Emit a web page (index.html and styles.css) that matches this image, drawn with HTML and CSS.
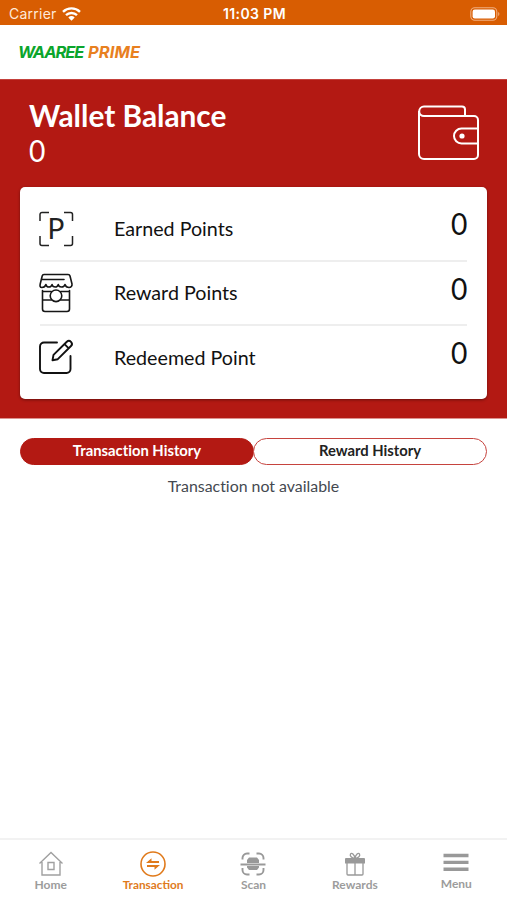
FILE: index.html
```
<!DOCTYPE html>
<html lang="en">
<head>
    <meta charset="UTF-8">
    <title>Waaree Prime - Wallet</title>
    <link rel="stylesheet" href="styles.css">
</head>
<body>
    <div class="status-bar">
        <div class="carrier">
            <span>Carrier</span>
            <svg width="19" height="14" viewBox="0 0 19 14" fill="none" stroke="#fff" stroke-width="2.4">
                <path d="M1 4.8a12.3 12.3 0 0 1 17 0"/>
                <path d="M4 8.2a8 8 0 0 1 11 0"/>
                <path d="M9.5 13.8 6.3 10.6a4.7 4.7 0 0 1 6.4 0z" fill="#fff" stroke="none"/>
            </svg>
        </div>
        <span class="time">11:03 PM</span>
        <svg class="battery" width="30" height="14" viewBox="0 0 30 14">
            <rect x="0.8" y="0.8" width="26" height="12.4" rx="4" fill="none" stroke="#f0ae80" stroke-width="1.1"/>
            <rect x="2.6" y="2.6" width="22.4" height="8.8" rx="2.2" fill="#fff"/>
            <path d="M28.2 5v4c1.6-.8 1.6-3.2 0-4z" fill="#f0ae80"/>
        </svg>
    </div>

    <header class="header">
        <div class="logo">
            <span class="logo-green">WAAREE</span>
            <span class="logo-orange">PRIME</span>
        </div>
    </header>

    <section class="wallet">
        <div class="balance">
            <div>
                <h1>Wallet Balance</h1>
                <p>0</p>
            </div>
            <svg width="62" height="56" viewBox="0 0 62 56" fill="none" stroke="#fff" stroke-width="2">
                <path d="M47 11V4.500a3 3 0 0 0-3-3H6a4.800 4.800 0 0 0 0 9.600h50a4 4 0 0 1 4 4V50a4 4 0 0 1-4 4H6a5 5 0 0 1-5-5V6"/>
                <path d="M60 23.500H43.500a7.500 7.500 0 0 0 0 15H60"/>
                <circle cx="44" cy="31" r="2.600" fill="#fff" stroke="none"/>
            </svg>
        </div>

        <div class="card">
            <div class="row">
                <svg class="row-icon" width="36" height="40" viewBox="0 0 36 40" fill="none" stroke="#222" stroke-width="1.500">
                    <path d="M1 12V5.500a2 2 0 0 1 2-2h7M25 3.500h6.500a2 2 0 0 1 2 2V12M33.500 27v7.500a2 2 0 0 1-2 2H25M10 36.500H3a2 2 0 0 1-2-2V27"/>
                    <text x="8.500" y="29.500" class="p-mark">P</text>
                </svg>
                <span class="label">Earned Points</span>
                <span class="value">0</span>
            </div>
            <div class="row">
                <svg class="row-icon" width="36" height="40" viewBox="0 0 36 40" fill="none" stroke="#161616" stroke-width="1.600" stroke-linecap="round" stroke-linejoin="round">
                    <path d="M5 1.500h24a2 2 0 0 1 2 1.500l2 8c.3 2-1 3.500-3 3.500s-3.500-1.300-4-3c-.5 1.700-2 2.500-3.500 2.500s-3-.8-3.200-2.500c-.5 1.700-1.500 2.500-3 2.500s-3-.8-3.200-2.500c-.5 1.700-1.800 2.500-3.200 2.500-1.500 0-2.700-.8-3-2.500-.5 1.700-2 3-4 3S.8 13 1.200 11l2-8A2 2 0 0 1 5 1.500zM3.500 6.500H25"/>
                    <path d="M3.500 17.500V36a2.500 2.500 0 0 0 2.500 2.500h22a2.500 2.500 0 0 0 2.500-2.500V17.500M3.500 18.500h8.800M21.700 18.500h8.800M3.500 27h8.700M21.800 27h8.700"/>
                    <circle cx="17" cy="22.800" r="5.800"/>
                </svg>
                <span class="label">Reward Points</span>
                <span class="value">0</span>
            </div>
            <div class="row">
                <svg class="row-icon" width="36" height="40" viewBox="0 0 36 40" fill="none" stroke="#111" stroke-width="1.900" stroke-linecap="round" stroke-linejoin="round">
                    <path d="M18 4.500H5a4 4 0 0 0-4 4V31a4 4 0 0 0 4 4h22.500a4 4 0 0 0 4-4V18"/>
                    <path d="M13.500 22.200l1-5.300L27.800 3.800a2.900 2.900 0 0 1 4.200 4.200L18.800 21.200zM25.500 6.200l4 4"/>
                </svg>
                <span class="label">Redeemed Point</span>
                <span class="value">0</span>
            </div>
        </div>
    </section>

    <div class="tabs">
        <button class="tab active">Transaction History</button>
        <button class="tab">Reward History</button>
    </div>
    <p class="empty">Transaction not available</p>

    <nav class="bottom-nav">
        <a class="nav-item home">
            <svg width="26" height="26" viewBox="0 0 26 26" fill="none" stroke="#a0a0a0" stroke-width="1.400">
                <path d="M1.500 12.500 13 1.500l11.500 11M4 11v13h18V11M10 11.500h6v7h-6z"/>
            </svg>
            <span>Home</span>
        </a>
        <a class="nav-item transaction active">
            <svg width="26" height="26" viewBox="0 0 26 26" fill="none" stroke="#e07a1b" stroke-width="1.600">
                <circle cx="13" cy="13" r="12"/>
                <path d="M19 11H8M7 15h11" stroke-width="2.200"/>
                <path d="M6 12 11.500 7.200V12zM20 14l-5.500 4.800V14z" fill="#e07a1b" stroke="none"/>
            </svg>
            <span>Transaction</span>
        </a>
        <a class="nav-item scan">
            <svg width="26" height="26" viewBox="0 0 26 26" fill="none" stroke="#999" stroke-width="1.900">
                <path d="M2.500 8.500V7A4.500 4.500 0 0 1 7 2.500h2.500M16.500 2.500H19A4.500 4.500 0 0 1 23.500 7v1.500M23.500 17v2a4.500 4.500 0 0 1-4.500 4.500h-2.500M9.500 23.500H7A4.500 4.500 0 0 1 2.500 19v-2M.5 13.500h25"/>
                <path d="M7 12V9l2-2.500h8L19 9v3zM7 15h12v1.500l-2 2.500H9l-2-2.500z" fill="#999" stroke="none"/>
            </svg>
            <span>Scan</span>
        </a>
        <a class="nav-item rewards">
            <svg width="26" height="26" viewBox="0 0 26 26" fill="none" stroke="#999" stroke-width="1.300">
                <path d="M5 11v12a1 1 0 0 0 1 1h14a1 1 0 0 0 1-1V11M13 11v13"/>
                <path d="M4 7h18a1 1 0 0 1 1 1v4.500H3V8a1 1 0 0 1 1-1z" fill="#999" stroke="none"/>
                <path d="M13 7.500C9.500 7 7.500 5 8.500 3s4 .5 4.500 4.500c.5-4 3.500-6.500 4.500-4.500s-1 4-4.500 4.500z"/>
            </svg>
            <span>Rewards</span>
        </a>
        <a class="nav-item menu">
            <svg width="26" height="25" viewBox="0 0 26 25" fill="#999">
                <path d="M.5 2.800h25v3.500H.5zM.5 9.700h25v3.400H.5zM.5 16.500h25v3.500H.5z"/>
            </svg>
            <span>Menu</span>
        </a>
    </nav>
</body>
</html>
```
FILE: styles.css
```
* {
    box-sizing: border-box;
}

body {
    margin: 0;
    height: 900px;
    display: flex;
    flex-direction: column;
    font-family: Lato, sans-serif;
    font-variant-ligatures: none;
    background-color: #fff;
    color: #111;
    overflow: hidden;
}

h1, p {
    margin: 0;
}

svg {
    display: block;
    flex-shrink: 0;
}

.status-bar {
    height: 25px;
    padding: 2px 7px 0 9px;
    display: grid;
    grid-template-columns: 1fr auto 1fr;
    align-items: center;
    background-color: #d85d02;
    color: #fff;
    font-family: Inter, sans-serif;
    font-size: 14px;
}

.carrier {
    display: flex;
    align-items: center;
    gap: 5px;
    color: #ffe9d9;
    letter-spacing: 0.25px;
}

.time {
    font-size: 14px;
    font-weight: 600;
    letter-spacing: 0.4px;
}

.battery {
    justify-self: end;
}

.header {
    height: 54px;
    padding: 17px 18px 0;
}

.logo {
    display: flex;
    font-family: Inter, sans-serif;
    font-size: 16.5px;
    line-height: 20px;
    font-weight: 700;
    font-style: italic;
}

.logo-green {
    width: 70px;
    letter-spacing: -1.1px;
    color: #0ba52c;
}

.logo-orange {
    letter-spacing: 0.1px;
    color: #e8801f;
}

.wallet {
    height: 340px;
    padding: 20px 20px 0;
    background-color: #b31913;
    border-top: 1px solid #c4413c;
    border-bottom: 1px solid #dc9390;
}

.balance {
    height: 87px;
    padding: 0 8px 0 9px;
    display: flex;
    justify-content: space-between;
    color: #fff;
}

.balance > svg {
    margin: 5px -1px 0 0;
}

.balance h1 {
    font-size: 29.8px;
    line-height: 32px;
    font-weight: bold;
}

.balance p {
    font-size: 30px;
    line-height: 36px;
    transform: scaleX(0.94);
    transform-origin: left;
}

.card {
    height: 212px;
    padding: 10px 20px;
    border-radius: 5px;
    background-color: #fff;
    box-shadow: 0 1px 3px rgba(0, 0, 0, 0.4);
}

.row {
    height: 64.6px;
    display: flex;
    align-items: center;
    border-bottom: 2px solid #eee;
}

.row:last-child {
    border-bottom-color: transparent;
}

.row-icon {
    margin: 1px 39px 0 -1px;
}

.p-mark {
    font-size: 28px;
    fill: #222;
    stroke: none;
}

.label {
    flex: 1;
    font-size: 19.7px;
}

.value {
    font-size: 30px;
    line-height: 36px;
    margin-bottom: 10px;
    transform: scaleX(0.94);
    transform-origin: right;
}

.tabs {
    display: flex;
    margin: 19px 20px 0;
}

.tab {
    flex: 1;
    height: 27px;
    padding: 0 0 3px;
    border: 1.5px solid #c6433e;
    border-radius: 14px;
    background-color: #fff;
    color: #222;
    font-family: Lato, sans-serif;
    font-size: 14.8px;
    font-weight: bold;
    font-variant-ligatures: none;
}

/* keeps the two pills touching */
.tab + .tab {
    margin-left: -1px;
}

.tab.active {
    background-color: #b31913;
    border-color: #b31913;
    color: #fff;
}

.empty {
    margin-top: 11px;
    text-align: center;
    font-size: 15.9px;
    line-height: 20px;
    color: #444950;
}

.bottom-nav {
    height: 62px;
    margin-top: auto;
    padding-top: 11px;
    display: grid;
    grid-template-columns: repeat(5, 1fr);
    border-top: 2px solid #f2f2f2;
}

.nav-item {
    display: flex;
    flex-direction: column;
    align-items: center;
    font-size: 12px;
    line-height: 15px;
    font-weight: bold;
    color: #9c9c9c;
}

.nav-item.active {
    padding-left: 2px;
    font-size: 11.8px;
    line-height: 16px;
    font-variant-ligatures: normal;
    color: #e07a1b;
}
```
